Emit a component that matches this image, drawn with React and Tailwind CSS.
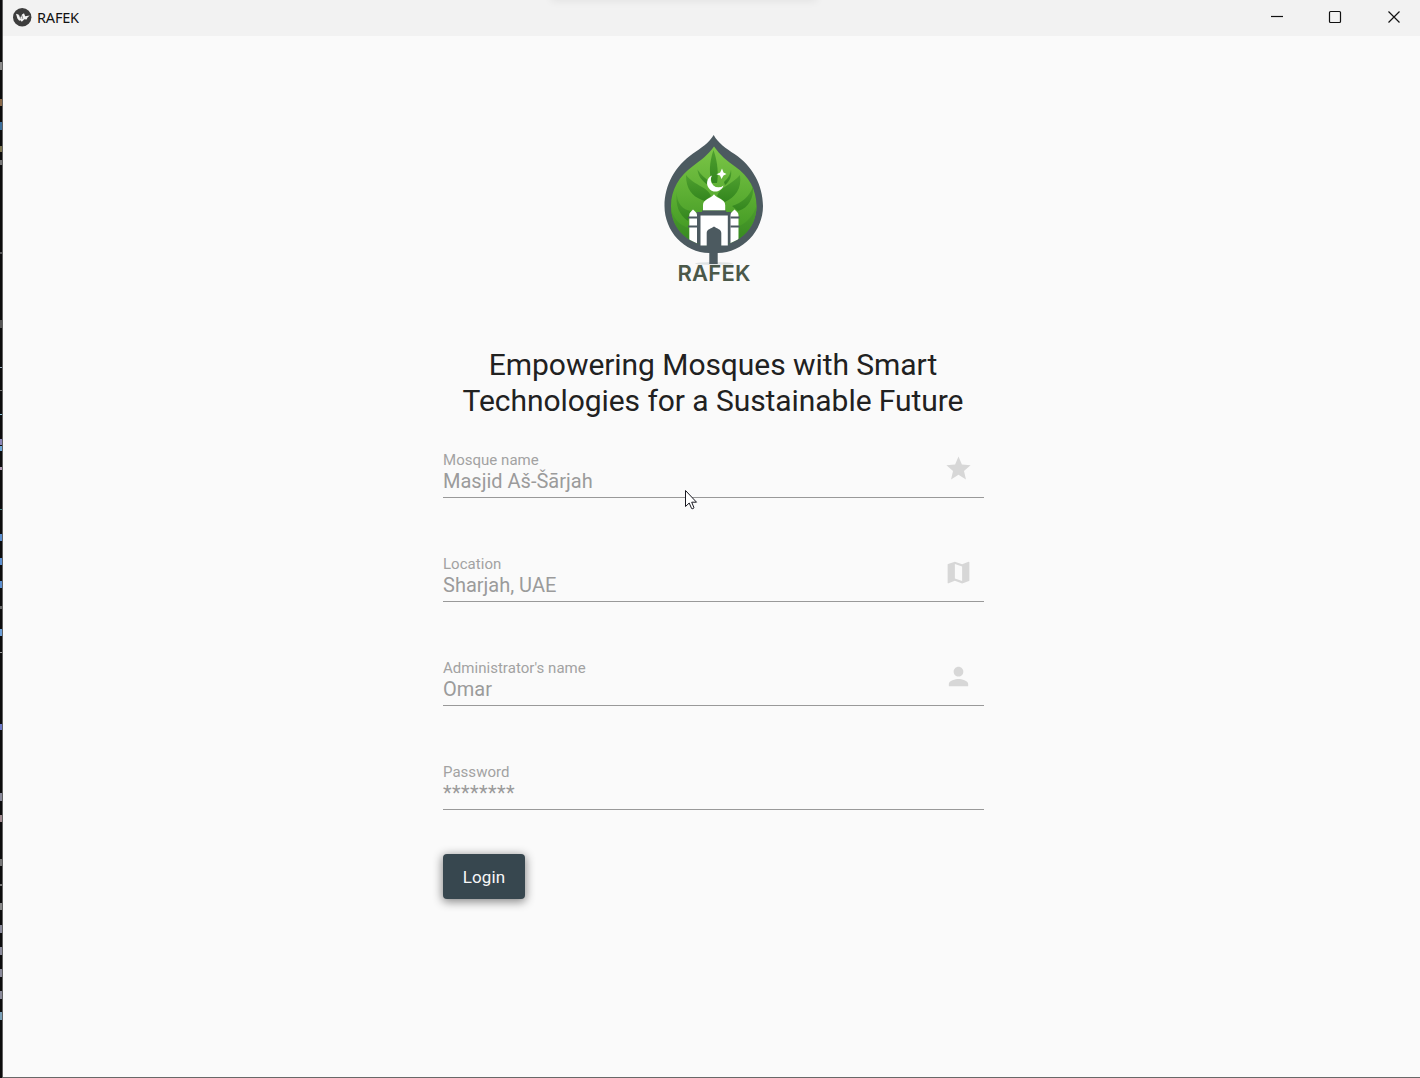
import React from "react";
import { MdStar, MdMap, MdPerson } from "react-icons/md";

const fields = [
  { label: "Mosque name", value: "Masjid Aš-Šārjah", Icon: MdStar },
  { label: "Location", value: "Sharjah, UAE", Icon: MdMap },
  { label: "Administrator's name", value: "Omar", Icon: MdPerson },
  { label: "Password", value: "********", Icon: null, masked: true },
];

const flecks = [
  [62, 8, "#8b8b8b"], [99, 7, "#8a6a4a"], [122, 8, "#3c6f9c"], [146, 6, "#7a7350"], [160, 5, "#777777"],
  [252, 2, "#555555"], [320, 8, "#555555"], [367, 1, "#9ab"], [390, 1, "#777777"], [414, 1, "#8fc7dd"],
  [439, 6, "#8b86b8"], [446, 5, "#6fa8d8"], [467, 3, "#b09ab0"], [509, 1, "#4f8585"],
  [534, 7, "#5c8fd0"], [558, 7, "#5c8fd0"], [581, 7, "#5c8fd0"], [606, 3, "#666666"],
  [629, 7, "#6c9fd8"], [652, 1, "#9c9c9c"], [724, 6, "#6d79c8"], [793, 8, "#8a8a9a"], [815, 7, "#a08a90"],
  [859, 7, "#777777"], [884, 2, "#777777"], [903, 7, "#8a8a8a"], [925, 8, "#8a8a9a"], [947, 8, "#8a8a9a"],
  [969, 8, "#8a8a9a"], [991, 8, "#8a8a9a"], [1012, 8, "#7aa0b8"],
];

function KivyMark() {
  return (
    <svg width="19" height="19" viewBox="0 0 19 19">
      <circle cx="9.2" cy="9.2" r="9.2" fill="#3d3d3d" />
      <path d="M3 5.800 5.400 6.400 8 9.400 9 6.600 11 5.300 12.200 8.200 16.800 7.400 14.500 9.400 13.600 11.500 11.400 11.200 8.800 13.800 7.400 12.200 6.200 12.800 4.400 10.400Z" fill="#f4f4f4" />
      <path d="M6.200 7.600 8 10.800M9.200 7.600 9.800 11" fill="none" stroke="#3d3d3d" strokeWidth=".5" />
    </svg>
  );
}

function Logo() {
  return (
    <svg width="120" height="165" viewBox="0 0 120 165" className="block">
      <defs>
        <linearGradient id="leaf" x1="0" y1="0" x2="0" y2="1">
          <stop offset="0" stopColor="#80c94a" />
          <stop offset=".5" stopColor="#5cae33" />
          <stop offset="1" stopColor="#37901c" />
        </linearGradient>
        <linearGradient id="vein" x1="0" y1="0" x2="0" y2="1">
          <stop offset="0" stopColor="#4fa02f" />
          <stop offset="1" stopColor="#33861e" />
        </linearGradient>
        <clipPath id="inner">
          <path d="M59 21.500C65 30 72 36 80 41.500 94 51 101.500 65 101.500 81 101.500 105 82 121 58.500 121 35 121 16 105 16 81 16 65 24 51 38 41 46 35 53 30 59 21.500Z" />
        </clipPath>
      </defs>
      <ellipse cx="59" cy="138.500" rx="19" ry="1.500" fill="#dfe3e3" />
      <path d="M58.700 10C63 18 71 23.500 79.500 29 97 40.500 108 60 108 81 108 106 88 127.700 62.700 128V139H54.300V128C29 127.700 9.500 106 9.500 81 9.500 60 20 41 38 28.500 46 23 54 18 58.700 10Z" fill="#4c5a60" />
      <g clipPath="url(#inner)">
        <path d="M10 15H110V125H10Z" fill="url(#leaf)" />
        <g fill="url(#vein)">
          <path d="M58.500 25C54 38 54 49 57 58H62C63.500 50 63 38 58.500 25Z" />
          <path d="M42.500 44.500C43 51 47 56 53 60L54 56C50 53 46 50 42.500 44.500Z" />
          <path d="M76 44.500C75 51 72 54 69 57L70 60C75 56 77 51 76 44.500Z" />
          <path d="M31 50C31 64 37 71 47 75L50 76 56 71C53 62 40 61 31 50Z" />
          <path d="M85 50C87 64 80 72 70 77L62 71C65 62 76 60 85 50Z" />
          <path d="M22 67C21 78 28 85 36 86L33 96C24 90 20 80 22 67Z" />
          <path d="M98 61C95 72 86 78 77 81L83 86C94 83 99 72 98 61Z" />
          <path d="M16 84C20 97 27 101 34 103V122H16ZM102 79C98 92 92 97 83 102V118H102Z" />
        </g>
        <path d="M41.500 87H76V122H41.500Z" fill="#4c5a60" />
        <path d="M34.300 122V90C34.300 87.500 36.500 86.500 38 84.500 39.700 86.500 42 87.500 42 90V122ZM75.500 122V90C75.500 87.500 78 86.500 79.500 84.500 81.200 86.500 83.500 87.500 83.500 90V122Z" fill="#fff" />
        <path d="M33 92.500H42.500M33 101.500H42.500M75.500 92.500H84.500M75.500 101.500H84.500" stroke="#4c5a60" strokeWidth="2" />
      </g>
      <path d="M48 85.500V80C48 74 56 73.500 59 69.200 62 73.500 70.200 74 70.200 80V85.500Z" fill="#fff" />
      <path d="M47 85.500H71.200V90.500H47Z" fill="#4c5a60" />
      <path d="M45.500 90.500H72.800V120.500H45.500Z" fill="#fff" />
      <path d="M51.700 121V108C51.700 104 56 104 59 101.500 62 104 66.300 104 66.300 108V121Z" fill="#4c5a60" />
      <path d="M57 50.500A8.400 8.400 0 1 0 68.500 60.500A7.700 7.700 0 0 1 57 50.500ZM67 43.500 68.500 47.500 71.500 49 68.500 50.500 66.500 54 65 50.500 61.500 49.200 65.200 47.500Z" fill="#fff" />
      <text x="22.500" y="156" textLength="73" lengthAdjust="spacing" fill="#4a5849" className="font-['Inter'] text-[22px] font-semibold">RAFEK</text>
    </svg>
  );
}

function Field({ label, value, Icon, masked }) {
  return (
    <div className="mb-[56px] flex h-[48px] items-start justify-between border-b border-[#999999]">
      <div className="-mt-px flex flex-col text-[#9b9b9b]">
        <span className="h-[20px] text-[15px] leading-[22px] tracking-[0.03px] text-[#a2a2a2]">{label}</span>
        <span className={masked ? "h-[24px] text-[20px] leading-[25px] tracking-[0.4px]" : "h-[24px] text-[20px] leading-[24px]"}>{value}</span>
      </div>
      {Icon && <Icon className="mr-[11px] mt-[4px] size-[29px] text-[#d7d7d7]" />}
    </div>
  );
}

export default function App() {
  return (
    <div className="relative flex h-[1078px] w-[1420px] overflow-hidden bg-[#fafafa] font-['Roboto',sans-serif]">
      <div className="w-[3px] shrink-0 border-r border-[#5f5f5f] bg-[#0c0c0d]">
        <svg width="2" height="1078" className="block">
          {flecks.map(([y, h, c]) => (
            <rect key={y} x="0" y={y} width="2" height={h} fill={c} />
          ))}
        </svg>
      </div>
      <div className="flex min-w-0 flex-1 flex-col border-b border-[#686868]">
        <header className="relative flex h-[36px] shrink-0 items-center justify-between overflow-hidden bg-[#f2f2f2]">
          <div className="absolute -top-[6px] left-[550px] h-[5px] w-[262px] shadow-[0_0_8px_2px_rgba(0,0,0,0.07)]" />
          <div className="flex items-center pb-[2px] pl-[10px]">
            <KivyMark />
            <span className="ml-[5px] font-['Noto_Sans'] text-[14.5px] leading-[20px] tracking-[-0.2px] text-[#111111]">RAFEK</span>
          </div>
          <svg width="150" height="36" viewBox="0 0 150 36" fill="none" stroke="#111" strokeWidth="1.2">
            <path d="M1 16.500H13" />
            <rect x="59.500" y="11.500" width="11" height="11" rx="1" />
            <path d="M118.500 11.500 129.500 22.500M129.500 11.500 118.500 22.500" />
          </svg>
        </header>
        <main className="flex flex-col items-center pt-[89px]">
          <div className="ml-[7px]">
            <Logo />
          </div>
          <h1 className="ml-[3px] mt-[57px] text-center text-[30px] leading-[36px] tracking-[-0.06px] text-[#212121]">
            <span className="block">Empowering Mosques with Smart</span>
            <span className="block">Technologies for a Sustainable Future</span>
          </h1>
          <form className="ml-[4px] mt-[31px] w-[541px]">
            {fields.map((f) => (
              <Field key={f.label} {...f} />
            ))}
            <button type="button" className="-mt-[12px] block h-[45px] w-[82px] rounded-[4px] bg-[#37474f] pt-[2px] text-[17px] tracking-[0.1px] text-[#f7f7f7] shadow-[0_2px_10px_1px_rgba(0,0,0,0.45)]">
              Login
            </button>
          </form>
        </main>
      </div>
      <svg width="14" height="22" viewBox="0 0 14 22" className="absolute left-[684px] top-[489px]">
        <path d="M1.500 1.500V17.500L5.200 14 7.600 19.500Q8.800 20.200 10 18.800L7.700 13.200H12.500Z" fill="#fff" stroke="#181820" strokeWidth="1" />
      </svg>
    </div>
  );
}
